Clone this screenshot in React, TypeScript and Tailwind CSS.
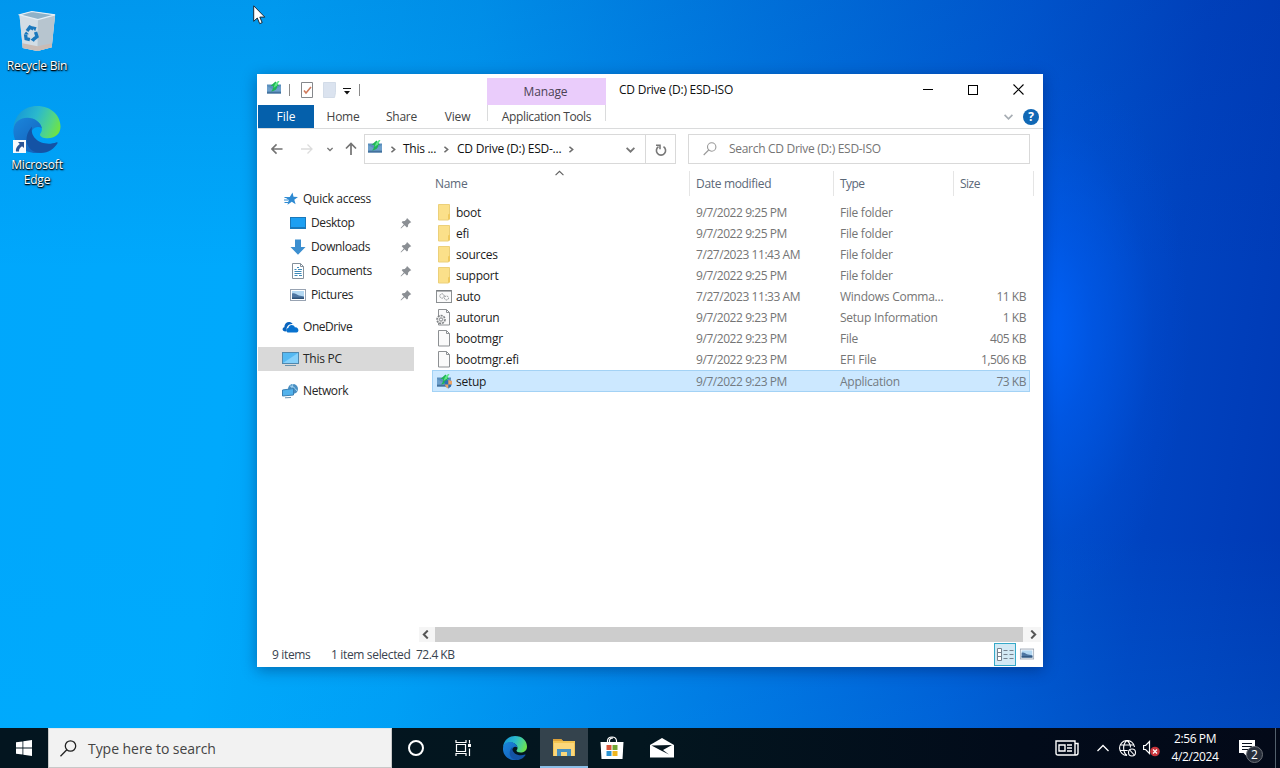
import React from "react";

const Setup = ({ shield = false }: { shield?: boolean }) => (
  <svg width="16" height="16" viewBox="0 0 16 16" className="shrink-0">
    <path d="M1 4.500h14v9H1z" fill="#5a8fbd" />
    <path d="M1 11.500h14v2H1z" fill="#44719c" />
    <path d="M1 6l7 4 7-4v5.500H1z" fill="#6d9fcb" />
    <path d="M5 11.500c4.500-.5 6-2.500 6.200-5.500H13L9.500 1.500 4.500 6h2.700c.1 2-.5 4-2.200 5.500z" fill="#1fb455" />
    <path d="M9 4l3-3h1.500L11 5.500 7.500 8z" fill="#5ee886" />
    {shield && (
      <>
        <path d="M8.500 8l3.700-1L16 8c0 4-1 6-3.700 7.500C9.500 14 8.500 12 8.500 8z" fill="#2b6fb5" />
        <path d="M12.300 7L16 8v3.500h-3.700zM8.900 11.500h3.400v4c-2-1-3-2.200-3.400-4z" fill="#eda566" />
      </>
    )}
  </svg>
);

const Chevron = ({ dir, className, size = 8, w = 1.5 }: { dir: string; className: string; size?: number; w?: number }) => (
  <svg width={size} height={size} viewBox="0 0 8 8" fill="none" stroke="currentColor" strokeWidth={w} className={className}>
    <path d={dir === "down" ? "M0.500 2.500L4 6 7.500 2.500" : dir === "up" ? "M0.500 5.500L4 2 7.500 5.500" : dir === "right" ? "M2.500 2L4.800 4 2.500 6" : "M6 0.500L2.500 4 6 7.500"} />
  </svg>
);

const Picture = () => (
  <svg width="16" height="16" viewBox="0 0 16 16" className="shrink-0">
    <rect x="0.500" y="2.500" width="15" height="11" fill="#fff" stroke="#98a3b2" />
    <rect x="2" y="4" width="12" height="8" fill="#b4d8f2" />
    <path d="M2 6.500c3-1 4 1 7 2l5 1V12H2z" fill="#4e76a2" />
    <path d="M2 10.500h12V12H2z" fill="#2e5278" />
  </svg>
);

const Pin = () => (
  <svg width="12" height="12" viewBox="0 0 12 12" className="mr-[2px]">
    <path d="M7 1l4.300 4.300-1.300.4-1.800 1.800-.3 2.300-1 .7-2.300-2.300L1 11.500l-.4-.4 3.200-3.700L1.700 5.200l.8-1 2.300-.3L6.500 2.200z" fill="#8b8f94" />
  </svg>
);

const EdgeLogo = ({ className }: { className: string }) => (
  <svg viewBox="0 0 48 48" className={className}>
    <defs>
      <linearGradient id="edgeTop" x1="0" y1="0.300" x2="1" y2="0.600">
        <stop offset="0" stopColor="#1597d8" />
        <stop offset="0.450" stopColor="#2bb9cc" />
        <stop offset="0.800" stopColor="#52d685" />
        <stop offset="1" stopColor="#6fe245" />
      </linearGradient>
      <linearGradient id="edgeLeft" x1="0" y1="0" x2="0.700" y2="1">
        <stop offset="0" stopColor="#1a86dc" />
        <stop offset="1" stopColor="#1463bd" />
      </linearGradient>
    </defs>
    <path d="M0 23C1 9 11 0 24 0c15 0 24 10 24 21 0 8-6 12-13 12-5 0-8-2-8-4 0-1 2-2 2-5 0-6-6-11-14-11C7 13 2 17 0 23z" fill="url(#edgeTop)" />
    <path d="M0 24c1-8 7-12 14-12 8 0 14 5 15 11-5-4-12 0-12 9 0 7 4 13 11 15-2 1-3 1-5 1C10 48-1 38 0 24z" fill="url(#edgeLeft)" />
    <path d="M19 21c-11 12-5 27 9 27 8 0 14-5 17-10 0-1 0-1-1-1-13 5-28-3-25-16z" fill="#1453a5" />
  </svg>
);

const Folder = () => (
  <svg width="16" height="17" viewBox="0 0 16 17">
    <path d="M2.500.5h11v13l-1 2.500h-10z" fill="#fbe08a" stroke="#ecd07a" />
    <path d="M12 10.500l2-1v6h-2z" fill="#efc95f" />
  </svg>
);

const Page = ({ gear = false }: { gear?: boolean }) => (
  <svg width="16" height="17" viewBox="0 0 16 17" fill="none" stroke="#8d9093">
    <path d="M2.500.5h8l3 3v12.500h-11z" fill="#fafafa" />
    <path d="M10.500.5v3h3" />
    {gear && (
      <>
        <circle cx="5" cy="10.500" r="4" fill="#e8e8e8" stroke="#808386" strokeWidth="1.600" strokeDasharray="2 1" />
        <circle cx="5" cy="10.500" r="1.600" fill="#fff" stroke="#808386" />
      </>
    )}
  </svg>
);

const Cmd = () => (
  <svg width="16" height="16" viewBox="0 0 16 16" fill="none" stroke="#8b8f92">
    <rect x="0.500" y="1.500" width="15" height="12" fill="#fafafa" />
    <path d="M1 2h14" stroke="#686c70" />
    <circle cx="6" cy="7" r="2.200" strokeDasharray="1.500 .7" />
    <circle cx="10.500" cy="9" r="2" strokeDasharray="1.500 .7" />
  </svg>
);

const sideIcons: Record<string, React.ReactNode> = {
  "Quick access": (
    <svg width="16" height="16" viewBox="0 0 16 16">
      <path d="M9.500 1.500l1 4.300 4.500.2-3.700 2.700 1.300 4.600-3.800-2.600-4.300 3 1.200-4.800L2 6.300l4.800-.4z" fill="#2e8ad2" />
      <path d="M1 9h4M1.500 11.500H5M1.500 6.500h3" stroke="#2e8ad2" />
    </svg>
  ),
  Desktop: (
    <svg width="16" height="16" viewBox="0 0 16 16">
      <rect x="0.500" y="2.500" width="15" height="11" fill="#1c9ff2" stroke="#1a78ba" />
      <path d="M1 12.500h14" stroke="#1a78ba" />
    </svg>
  ),
  Downloads: (
    <svg width="16" height="16" viewBox="0 0 16 16">
      <path d="M5 .5h6V8h4.500L8 15.700.5 8H5z" fill="#3c8fd0" />
    </svg>
  ),
  Documents: (
    <svg width="16" height="16" viewBox="0 0 16 16" fill="none" stroke="#84909b">
      <path d="M2.500.5h8l3 3v12h-11z" fill="#fff" />
      <path d="M10.500.5v3h3" />
      <path d="M4.500 6.500h2M4.500 8.500h7M4.500 10.500h7M4.500 12.500h3M9 12.500h3M8 6.500h4M7 4.500h2" stroke="#3f8ab8" />
    </svg>
  ),
  Pictures: <Picture />,
  OneDrive: (
    <svg width="17" height="16" viewBox="0 0 17 16">
      <path d="M3.500 12.500C0 12.500-.3 9 2.300 8.200 2.500 3 8 1.500 10.700 5c-4-.5-6.700 3-6.200 7z" fill="#0a64bd" />
      <path d="M5.500 13.500C3.500 12 4 9.500 6.300 9c.7-3.500 5.200-4 6.700-.6 3.500-.5 4.800 4.600 1.500 5.100z" fill="#0872cf" />
    </svg>
  ),
  "This PC": (
    <svg width="17" height="16" viewBox="0 0 17 16">
      <rect x="0.500" y="1.500" width="16" height="11" fill="#55b9f2" stroke="#5188ad" />
      <path d="M1 12L16 2v10z" fill="#85d0fa" />
      <path d="M3 14.500h11" stroke="#6691ac" />
    </svg>
  ),
  Network: (
    <svg width="17" height="16" viewBox="0 0 17 16">
      <circle cx="11" cy="6" r="5" fill="#4a8fc2" />
      <path d="M8 3c3 0 5 2 7 5M11 1c-2 4-1 7 1 10" stroke="#a9d9f5" fill="none" />
      <path d="M.5 7l11-1.500v6.500l-11 1z" fill="#52b2ec" stroke="#3a80b4" />
      <path d="M3 14.800l6-.3" stroke="#6a93b0" />
    </svg>
  ),
};

const side = [
  { name: "Quick access", cls: "pl-[24px]", text: "tracking-[-0.270px]" },
  { name: "Desktop", cls: "pl-[31px]", text: "tracking-[-0.400px]", pin: true },
  { name: "Downloads", cls: "pl-[31px]", text: "tracking-[-0.380px]", pin: true },
  { name: "Documents", cls: "pl-[31px]", text: "tracking-[-0.380px]", pin: true },
  { name: "Pictures", cls: "pl-[31px]", text: "tracking-[-0.350px]", pin: true },
  { name: "OneDrive", cls: "pl-[24px] mt-2", text: "tracking-[-0.450px]" },
  { name: "This PC", cls: "pl-[24px] mt-2 bg-[#d9d9d9]", text: "tracking-[-0.270px]" },
  { name: "Network", cls: "pl-[24px] mt-2", text: "tracking-[-0.370px]" },
];

const files: { name: string; date: string; type: string; size?: string; icon: React.ReactNode }[] = [
  { name: "boot", date: "9/7/2022 9:25 PM", type: "File folder", icon: <Folder /> },
  { name: "efi", date: "9/7/2022 9:25 PM", type: "File folder", icon: <Folder /> },
  { name: "sources", date: "7/27/2023 11:43 AM", type: "File folder", icon: <Folder /> },
  { name: "support", date: "9/7/2022 9:25 PM", type: "File folder", icon: <Folder /> },
  { name: "auto", date: "7/27/2023 11:33 AM", type: "Windows Comma...", size: "11 KB", icon: <Cmd /> },
  { name: "autorun", date: "9/7/2022 9:23 PM", type: "Setup Information", size: "1 KB", icon: <Page gear /> },
  { name: "bootmgr", date: "9/7/2022 9:23 PM", type: "File", size: "405 KB", icon: <Page /> },
  { name: "bootmgr.efi", date: "9/7/2022 9:23 PM", type: "EFI File", size: "1,506 KB", icon: <Page /> },
  { name: "setup", date: "9/7/2022 9:23 PM", type: "Application", size: "73 KB", icon: <Setup shield /> },
];

function TitleBar() {
  return (
    <div className="flex h-[31px] shrink-0">
      <div className="flex w-[229px] items-center pl-[8px]">
        <div className="-mt-[3px]"><Setup /></div>
        <div className="ml-[7px] h-[12px] w-px bg-[#8a8a8a]" />
        <svg width="14" height="16" viewBox="0 0 14 16" fill="none" className="ml-[10px]">
          <path d="M1.500.5h11v15h-11z" fill="#fff" stroke="#84878b" />
          <path d="M4 8.500l2 2.500 5-6" stroke="#d07a5c" strokeWidth="1.600" />
        </svg>
        <svg width="14" height="16" viewBox="0 0 14 16" className="ml-[9px]">
          <path d="M.5.5h12v10l-1 5H.5z" fill="#dbe3ef" stroke="#d3dce8" />
        </svg>
        <svg width="8" height="7" viewBox="0 0 8 7" className="ml-[6px] mt-[3px]">
          <path d="M0 0h8v1H0zM1 3h6L4 6.500z" fill="#111" />
        </svg>
        <div className="ml-[8px] h-[12px] w-px bg-[#8a8a8a]" />
      </div>
      <div className="mt-[4px] flex w-[119px] items-center justify-center bg-[#eaccfb] pt-px pr-[2px] text-[#4b4254] tracking-[-0.150px]">Manage</div>
      <div className="flex flex-1 items-center pl-[13px] text-[#111]"><span className="tracking-[-0.240px]">CD Drive (D:) ESD-ISO</span></div>
      <div className="mr-px flex text-black">
        <div className="flex w-[46px] items-center justify-center"><div className="h-px w-[10px] bg-black" /></div>
        <div className="flex w-[45px] items-center justify-center"><div className="mr-px size-[10px] border border-black" /></div>
        <div className="flex w-[46px] items-center justify-center">
          <svg width="11" height="11" viewBox="0 0 11 11" stroke="#000" strokeWidth="1.100" className="mr-px"><path d="M.5.5l10 10M10.500.5l-10 10" /></svg>
        </div>
      </div>
    </div>
  );
}

function Tabs() {
  return (
    <div className="flex h-[24px] shrink-0 border-b border-[#dadbdc] text-[#444]">
      <div className="flex w-[56px] items-center justify-center bg-[#0560ab] text-white">File</div>
      <div className="flex w-[58px] items-center justify-center tracking-[-0.250px]">Home</div>
      <div className="flex w-[59px] items-center justify-center tracking-[-0.250px]">Share</div>
      <div className="flex w-[56px] items-center justify-center pr-[3px] tracking-[-0.150px]">View</div>
      <div className="flex h-[16px] w-[119px] justify-center border-x border-[#dadbdc]">
        <span className="ml-[-2px] mt-[4px] whitespace-nowrap leading-[16px] tracking-[-0.370px] translate-x-[1px]">Application Tools</span>
      </div>
      <div className="flex flex-1 items-center justify-end pr-[4px]">
        <Chevron dir="down" size={9} className="mr-[10px] text-[#a7adb3]" />
        <div className="flex size-[16px] items-center justify-center rounded-full bg-[#1168b5] text-[12px] font-bold leading-none text-white">?</div>
      </div>
    </div>
  );
}

function AddressBar() {
  return (
    <div className="flex h-[39px] shrink-0 items-center">
      <div className="flex w-[106px] items-center text-[#777]">
        <svg width="12" height="12" viewBox="0 0 13 12" fill="none" stroke="#737373" strokeWidth="1.700" className="ml-[13px] mr-px"><path d="M12.500 6H1.500M6 1L1 6l5 5" /></svg>
        <svg width="12" height="12" viewBox="0 0 12 12" fill="none" stroke="#dcdcdc" strokeWidth="1.300" className="ml-[17px]"><path d="M0 6h11M6.500 1.500L11 6l-4.500 4.500" /></svg>
        <Chevron dir="down" size={6} className="ml-[14px]" w={1.800} />
        <svg width="12" height="13" viewBox="0 0 12 13" fill="none" stroke="#737373" strokeWidth="1.700" className="ml-[12px]"><path d="M6 13V1.500M1 6.500l5-5 5 5" /></svg>
      </div>
      <div className="mt-px flex h-[30px] w-[312px] border border-[#d9d9d9] text-[#111]">
        <div className="flex w-[281px] items-center border-r border-[#d9d9d9] pl-[2px]">
          <div className="-mt-[4px]"><Setup /></div>
          <Chevron dir="right" size={11} className="ml-[5px] text-[#6d6d6d]" w={1.200} />
          <span className="ml-[4px] w-[34px] whitespace-nowrap tracking-[-0.280px]">This ...</span>
          <Chevron dir="right" size={11} className="ml-[4px] text-[#6d6d6d]" w={1.200} />
          <span className="ml-[5px] w-[106px] whitespace-nowrap tracking-[-0.230px]">CD Drive (D:) ESD-...</span>
          <Chevron dir="right" size={11} className="ml-[3px] text-[#6d6d6d]" w={1.200} />
          <Chevron dir="down" size={9} className="ml-auto mr-[10px] text-[#777]" w={1.700} />
        </div>
        <div className="flex flex-1 items-center justify-center">
          <svg width="12" height="13" viewBox="0 0 12 13" fill="none" stroke="#777" strokeWidth="1.600"><path d="M3.500 3.200A4.600 4.600 0 1 0 8.500 3.200M1 1.800h4v4" transform="translate(0 .5)" /></svg>
        </div>
      </div>
      <div className="ml-[12px] mt-px flex h-[30px] w-[342px] items-center border border-[#d9d9d9] pl-[14px] text-[#757575]">
        <svg width="14" height="14" viewBox="0 0 14 14" fill="none" stroke="#999" strokeWidth="1.100"><circle cx="8.700" cy="5" r="4.200" /><path d="M5.700 8L.7 13" /></svg>
        <span className="ml-[12px] tracking-[-0.300px]">Search CD Drive (D:) ESD-ISO</span>
      </div>
    </div>
  );
}

function FileList() {
  return (
    <div className="flex flex-1 flex-col pl-[18px]">
      <div className="relative flex h-[34px] shrink-0 items-start text-[#5b6878]">
        <div className="absolute left-[123px] top-[1px]"><Chevron dir="up" size={9} w={1} className="text-[#606060]" /></div>
        <div className="mt-[3px] flex h-[25px] w-[258px] items-center border-r border-[#e5e5e5] pl-[3px] tracking-[-0.300px]">Name</div>
        <div className="mt-[3px] flex h-[25px] w-[144px] items-center border-r border-[#e5e5e5] pl-[6px] tracking-[-0.320px]">Date modified</div>
        <div className="mt-[3px] flex h-[25px] w-[120px] items-center border-r border-[#e5e5e5] pl-[6px] tracking-[-0.600px]">Type</div>
        <div className="mt-[3px] flex h-[25px] w-[80px] items-center border-r border-[#e5e5e5] pl-[6px] tracking-[-0.500px]">Size</div>
      </div>
      {files.map((f, i) => (
        <div key={f.name} className={i === 8 ? "flex h-[22px] w-[598px] items-center border border-[#a3d2f5] bg-[#cce8ff] pl-[3px] text-[#737b82]" : "flex h-[21px] w-[598px] items-center pl-[4px] text-[#757575]"}>
          <div className="flex w-[20px]">{f.icon}</div>
          <div className="w-[240px] pt-px tracking-[-0.250px] text-[#1b1b1b]">{f.name}</div>
          <div className="w-[144px] whitespace-nowrap pt-px tracking-[-0.440px]">{f.date}</div>
          <div className="w-[114px] whitespace-nowrap pt-px tracking-[-0.250px]">{f.type}</div>
          <div className={i === 8 ? "flex-1 whitespace-nowrap pr-[3px] pt-px text-right tracking-[-0.480px]" : "flex-1 whitespace-nowrap pr-[4px] pt-px text-right tracking-[-0.480px]"}>{f.size}</div>
        </div>
      ))}
    </div>
  );
}

function Explorer() {
  return (
    <div className="ml-[257px] mt-[74px] flex h-[593px] w-[786px] flex-col bg-white pl-px text-[12px] shadow-[0_3px_14px_rgba(0,20,70,0.400)]">
      <TitleBar />
      <Tabs />
      <AddressBar />
      <div className="flex flex-1">
        <div className="w-[156px] pt-[19px] text-[#262626]">
          {side.map((s) => (
            <div key={s.name} className={`flex h-[24px] items-center ${s.cls}`}>
              <div className={s.pin ? "mr-[5px] flex w-[17px] justify-center" : "mr-[4px] flex w-[17px] justify-center"}>{sideIcons[s.name]}</div>
              <span className={`flex-1 whitespace-nowrap ${s.text}`}>{s.name}</span>
              {s.pin && <Pin />}
            </div>
          ))}
        </div>
        <div className="flex flex-1 flex-col">
          <FileList />
          <div className="ml-[5px] mr-[2px] flex h-[15px] items-center bg-[#f5f5f5] text-[#555]">
            <Chevron dir="left" size={9} className="ml-[2px] mr-[5px]" w={1.800} />
            <div className="h-full w-[588px] bg-[#cdcdcd]" />
            <svg width="9" height="9" viewBox="0 0 8 8" fill="none" stroke="currentColor" strokeWidth="1.800" className="ml-[6px]"><path d="M2 .5L5.500 4 2 7.500" /></svg>
          </div>
        </div>
      </div>
      <div className="flex h-[25px] shrink-0 items-center pl-[14px] text-[#39434f]">
        <span className="w-[59px] tracking-[-0.350px]">9 items</span>
        <span className="w-[85px] whitespace-nowrap tracking-[-0.340px]">1 item selected</span>
        <span className="tracking-[-0.500px]">72.4 KB</span>
        <div className="ml-auto mr-[3px] flex h-[23px] w-[22px] items-center justify-center border border-[#35a9c8] bg-[#d2e9f4]">
          <svg width="17" height="13" viewBox="0 0 17 13" fill="none" stroke="#75828e">
            <path d="M.5.5h4v12h-4zM.5 4.500h4M.5 8.500h4" fill="#fff" />
            <path d="M6.500 2.500h4M12.500 2.500h4M6.500 6.500h4M12.500 6.500h4M6.500 10.500h4M12.500 10.500h4" />
          </svg>
        </div>
        <div className="mr-[8px] -mt-px origin-center scale-90"><Picture /></div>
      </div>
    </div>
  );
}

function Desktop() {
  return (
    <>
      <div className="absolute left-0 top-[9px] flex w-[74px] flex-col items-center text-center text-[12px] leading-[15px] text-white [text-shadow:1px_1px_2px_#000,0_1px_1px_#000]">
        <svg width="38" height="44" viewBox="0 0 40 44">
          <path d="M1.500 5l13-3.500L39 5l-3.500 34-15 4L5 40z" fill="#bed3e0" />
          <path d="M1.500 5L21 10l18-5-3.500 34-15 4L5 40z" fill="#d2dde5" />
          <path d="M21 10l18-5-3.500 34-15 4z" fill="#b7c5cf" />
          <path d="M4.600 35l16 3 15.200-3-.3 4-15 4L5 40z" fill="#c9bcb6" />
          <path d="M1.500 5l13-3.500L39 5l-18 5z" fill="#8fb2c8" stroke="#e6eff5" strokeWidth="1.200" />
          <g fill="none" stroke="#1a78bd" strokeWidth="3.500">
            <path d="M9.500 22l3-4 4 2M18.500 23l1.500 5-4 3M12.500 31l-4-1-.5-4" />
          </g>
          <path d="M15 17l4.500 1-1.500 4.500zM17 28.500v5l-4-2.500zM6 26l2.500-3.500 3 3z" fill="#1a78bd" />
        </svg>
        <span className="mt-[5px] whitespace-nowrap tracking-[-0.200px]">Recycle Bin</span>
        <div className="relative mt-[33px] flex">
          <EdgeLogo className="h-[47px] w-[48px]" />
          <svg width="13" height="13" viewBox="0 0 13 13" className="absolute bottom-0 left-0">
            <path d="M0 0h13v13H0z" fill="#f6f9fc" />
            <path d="M5 2h6v6L9 6.300C6.500 8 6 9.500 6 11.500H3C2.500 8 4.500 6 6.800 4z" fill="#2a5496" />
          </svg>
        </div>
        <span className="mt-[4px] w-[64px] tracking-[-0.150px]">Microsoft Edge</span>
      </div>
      <svg width="13" height="20" viewBox="0 0 13 20" className="absolute left-[253px] top-[5px]">
        <path d="M.7.8v15.500l3.600-3.300 2.400 5.700 2.500-1.100-2.400-5.500h5z" fill="#fff" stroke="#1a2a38" />
      </svg>
    </>
  );
}

function Taskbar() {
  return (
    <div className="mt-auto flex h-[40px] w-full shrink-0 bg-[linear-gradient(90deg,#03151f_0%,#03161f_50%,#020b1a_80%,#030918_100%)] text-white">
      <div className="flex w-[48px] items-center justify-center">
        <svg width="16" height="16" viewBox="0 0 16 16" fill="#fff"><path d="M0 2.300L6.500 1.400v6.200H0zM7.300 1.300L16 0v7.600H7.300zM0 8.400h6.500v6.200L0 13.700zM7.300 8.400H16V16l-8.700-1.300z" /></svg>
      </div>
      <div className="flex w-[344px] items-center border border-[#c8c8c8] border-t-[#e0e8ec] bg-[#f2f2f2] pl-[11px] text-[#444]">
        <svg width="17" height="17" viewBox="0 0 17 17" fill="none" stroke="#222" strokeWidth="1.300"><circle cx="10.500" cy="6" r="5.200" /><path d="M6.800 9.800L.5 16.300" /></svg>
        <span className="ml-[11px] text-[14px] tracking-[-0.050px]">Type here to search</span>
      </div>
      <div className="flex w-[48px] items-center justify-center"><div className="size-[16px] rounded-full border-2 border-white" /></div>
      <div className="flex w-[48px] items-center justify-center pr-px">
        <svg width="17" height="16" viewBox="0 0 17 16" fill="none" stroke="#fff" strokeWidth="1.200"><path d="M1.500 4.500h9v7h-9zM1 0v2.500h10V0M1 16v-2.500h10V16M14.500 0v3.500M14.500 8.500V16" /><path d="M13 4h3v3h-3z" fill="#fff" stroke="none" /></svg>
      </div>
      <div className="flex w-[52px] items-center justify-center"><EdgeLogo className="ml-[2px] size-[24px]" /></div>
      <div className="flex w-[48px] items-center justify-center border-b-2 border-[#8cbfe8] bg-[#34434d]">
        <svg width="22" height="19" viewBox="0 0 22 19"><path d="M0 1h8l2 2h12v15H0z" fill="#f3c552" /><path d="M0 1h8l2 2H0z" fill="#dca03a" /><path d="M1 5h20v13H1z" fill="#fbd77b" /><path d="M4 18v-7h14v7h-4v-4H8v4z" fill="#4790bf" /></svg>
      </div>
      <div className="flex w-[49px] items-center justify-center pr-px">
        <svg width="24" height="24" viewBox="0 0 24 24"><path d="M7.500 7V4.500Q8 1 12 1t4.500 3.500V7M9.500 7V4Q10 2 13 2" fill="none" stroke="#fff" strokeWidth="1.200" /><path d="M.5 6h23l-1 17h-21z" fill="#fff" /><path d="M6.500 9h5v5h-5z" fill="#d9553a" /><path d="M12.500 9h5v5h-5z" fill="#72a634" /><path d="M6.500 15h5v5h-5z" fill="#2a93d1" /><path d="M12.500 15h5v5h-5z" fill="#efb51e" /></svg>
      </div>
      <div className="flex w-[49px] items-center justify-center">
        <svg width="24" height="20" viewBox="0 0 24 20"><path d="M0 7l12-7 12 7v12.500H0z" fill="#fff" /><path d="M1.500 7.500L22 7l-9 5 6 4.500L10 12z" fill="#061720" /></svg>
      </div>
      <div className="ml-auto flex items-center">
        <svg width="24" height="16" viewBox="0 0 24 16" fill="none" stroke="#fff" strokeWidth="1.400"><path d="M1 1h19v14H3q-2 0-2-2zM20 3.500h3V13q0 2-2 2h-2" /><path d="M4 5h6v6H4zM12 5h5M12 8h5M12 11h5" /></svg>
        <svg width="12" height="8" viewBox="0 0 12 8" fill="none" stroke="#fff" strokeWidth="1.300" className="ml-[18px]"><path d="M.5 7L6 1.500 11.500 7" /></svg>
        <svg width="18" height="17" viewBox="0 0 18 17" fill="none" stroke="#fff" strokeWidth="1.100" className="ml-[10px]"><path d="M8 15.500A7.500 7.500 0 1 1 15.500 7M1 5h14M.7 10.500h8M8 .5C3.500 4 3.500 12 8 15.500M8 .5c3 2.500 3.500 5 3.500 7" /><circle cx="13" cy="12.500" r="3.500" /><path d="M10.700 10l4.600 5" /></svg>
        <svg width="17" height="17" viewBox="0 0 17 17" fill="none" stroke="#fff" strokeWidth="1.200" className="ml-[6px]"><path d="M.6 5.500h2L6.500 1.500v12l-3.900-4h-2z" /><circle cx="12" cy="11.500" r="4.800" fill="#c8343b" stroke="none" /><path d="M10 9.500l4 4M14 9.500l-4 4" /></svg>
        <div className="ml-[7px] flex w-[56px] flex-col items-center whitespace-nowrap text-[12px] leading-[18px] tracking-[-0.400px]"><span>2:56 PM</span><span>4/2/2024</span></div>
        <div className="relative ml-[16px] h-[40px] w-[24px]">
          <svg width="16" height="17" viewBox="0 0 16 17" className="absolute left-0 top-[12px]"><path d="M0 0h16v13H8v3.500L4.500 13H0z" fill="#fff" /><path d="M3 3.500h10M3 6.500h10M3 9.500h7" stroke="#08101c" strokeWidth="1.200" /></svg>
          <div className="absolute left-[7px] top-[18px] flex size-[17px] items-center justify-center rounded-full border border-[#6c7077] bg-[#292f3b] text-[12px] leading-none">2</div>
        </div>
        <div className="ml-[12px] h-[40px] w-px bg-[#53606c]" />
        <div className="w-[4px]" />
      </div>
    </div>
  );
}

export default function App() {
  return (
    <div className="relative flex h-[768px] w-[1280px] flex-col overflow-hidden bg-[radial-gradient(ellipse_150px_280px_at_1040px_330px,rgba(0,100,255,0.900)_0%,rgba(0,92,245,0.550)_35%,rgba(0,80,230,0.150)_75%,rgba(0,80,230,0)_100%),linear-gradient(180deg,rgba(0,40,140,0.130)_0%,rgba(0,60,160,0)_35%,rgba(0,60,160,0)_70%,rgba(0,190,255,0.120)_100%),linear-gradient(97deg,#00a7fc_0%,#00a9fc_20%,#009cf4_35%,#007be4_55%,#005ad4_75%,#0043c0_88%,#0038b3_100%)] font-['Open_Sans','Noto_Sans',sans-serif] text-[12px]">
      <Desktop />
      <Explorer />
      <Taskbar />
    </div>
  );
}
